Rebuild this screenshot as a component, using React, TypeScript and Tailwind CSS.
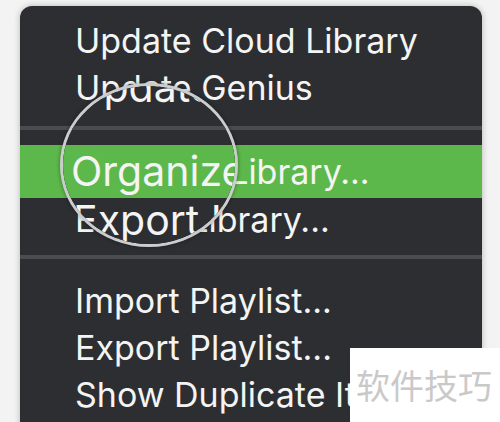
import React from "react";

function Sep() {
  return <div className="h-[4px] bg-[#4a4c50]" />;
}

function Menu({ big }: { big?: boolean }) {
  const text = big ? "text-[41px] pl-[53px]" : "text-[34px] pl-[55px]";
  return (
    <div
      className={`rounded-[12px] bg-[#2c2e31] text-[#f4f4f4] h-[440px] pt-[11px] whitespace-nowrap shadow-[0_0_6px_rgba(0,0,0,0.25)] ${text}`}
      style={{ fontFamily: "Inter, 'Noto Sans', sans-serif" }}
    >
      <div className="h-[47px] leading-[47px]">Update Cloud Library</div>
      <div className="h-[47px] leading-[47px]">Update Genius</div>
      <div className="-ml-[55px] pt-[15px] pb-[15px]">
        <Sep />
      </div>
      <div className="-ml-[55px] h-[53px] leading-[53px] bg-[#5db84b]">
        <span className={big ? "pl-[53px]" : "pl-[55px]"}>Organize Library...</span>
      </div>
      <div className="h-[44px] leading-[44px]">Export Library...</div>
      <div className="-ml-[55px] pt-[13px] pb-[18px]">
        <Sep />
      </div>
      <div className="h-[47px] leading-[47px]">Import Playlist...</div>
      <div className="h-[47px] leading-[47px]">Export Playlist...</div>
      <div className="h-[47px] leading-[47px]">Show Duplicate Items</div>
    </div>
  );
}

export default function App() {
  return (
    <div className="relative w-[500px] h-[422px] overflow-hidden bg-[#f3f3f3]">
      <div className="pt-[6px] pl-[20px] pr-[18px]">
        <Menu />
      </div>

      <div className="absolute left-[60px] top-[83px] w-[178px] h-[164px] rounded-[50%] overflow-hidden border-[3px] border-[#cbcccd] shadow-[0_0_4px_rgba(0,0,0,0.4)]">
        <div className="absolute left-[-63px] top-[-86px] w-[500px] h-[422px]">
          <div className="pt-[6px] pl-[20px] pr-[18px]">
            <Menu big />
          </div>
        </div>
      </div>

      <div
        className="absolute left-[350px] top-[348px] w-[150px] h-[74px] bg-white flex items-center pl-[6px] text-[34px] text-[#c9c9c9] leading-none whitespace-nowrap"
        style={{ fontFamily: "'Noto Sans CJK SC', sans-serif" }}
      >
        软件技巧
      </div>
    </div>
  );
}
